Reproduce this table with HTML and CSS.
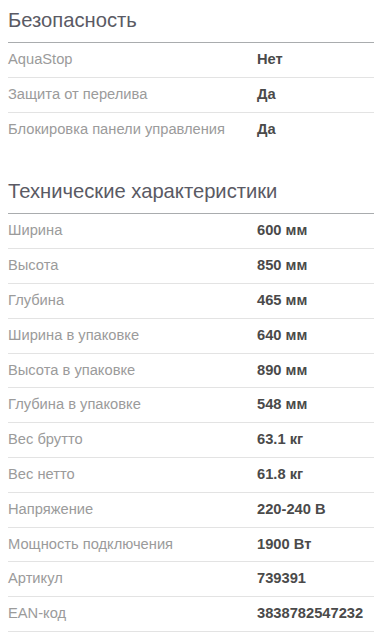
FILE: index.html
```html
<!DOCTYPE html>
<html lang="ru">
<head>
<meta charset="utf-8">
<link rel="stylesheet" href="styles.css">
</head>
<body>
<section class="spec">
  <h2 class="spec-title">Безопасность</h2>
  <div class="spec-list">
    <div class="row"><span class="label">AquaStop</span><span class="value">Нет</span></div>
    <div class="row"><span class="label">Защита от перелива</span><span class="value">Да</span></div>
    <div class="row last"><span class="label">Блокировка панели управления</span><span class="value">Да</span></div>
  </div>
</section>
<section class="spec second">
  <h2 class="spec-title">Технические характеристики</h2>
  <div class="spec-list">
    <div class="row"><span class="label">Ширина</span><span class="value">600 мм</span></div>
    <div class="row"><span class="label">Высота</span><span class="value">850 мм</span></div>
    <div class="row"><span class="label">Глубина</span><span class="value">465 мм</span></div>
    <div class="row"><span class="label">Ширина в упаковке</span><span class="value">640 мм</span></div>
    <div class="row"><span class="label">Высота в упаковке</span><span class="value">890 мм</span></div>
    <div class="row"><span class="label">Глубина в упаковке</span><span class="value">548 мм</span></div>
    <div class="row"><span class="label">Вес брутто</span><span class="value">63.1 кг</span></div>
    <div class="row"><span class="label">Вес нетто</span><span class="value">61.8 кг</span></div>
    <div class="row"><span class="label">Напряжение</span><span class="value">220-240 В</span></div>
    <div class="row"><span class="label">Мощность подключения</span><span class="value">1900 Вт</span></div>
    <div class="row"><span class="label">Артикул</span><span class="value">739391</span></div>
    <div class="row"><span class="label">EAN-код</span><span class="value">3838782547232</span></div>
  </div>
</section>
</body>
</html>
```

FILE: styles.css
```css
html, body {
  margin: 0;
  padding: 0;
  background: #ffffff;
}
body {
  font-family: "Liberation Sans", Arial, sans-serif;
  padding-left: 8px;
  overflow: hidden;
}
.spec-title {
  margin: 0;
  font-size: 20.2px;
  font-weight: normal;
  color: #5a5a64;
  line-height: 24px;
  padding: 8px 0 10px;
  border-bottom: 1px solid #a9acae;
}
.second {
  margin-top: 25px;
}
.row {
  display: grid;
  grid-template-columns: 249px 1fr;
  font-size: 14.7px;
  line-height: 17.8px;
  padding: 8px 0;
  border-bottom: 1px solid #e3e3e3;
}
.row.last {
  border-bottom: none;
}
.label {
  color: #9b9b9b;
}
.value {
  color: #4a4a4a;
  font-weight: bold;
}
```
